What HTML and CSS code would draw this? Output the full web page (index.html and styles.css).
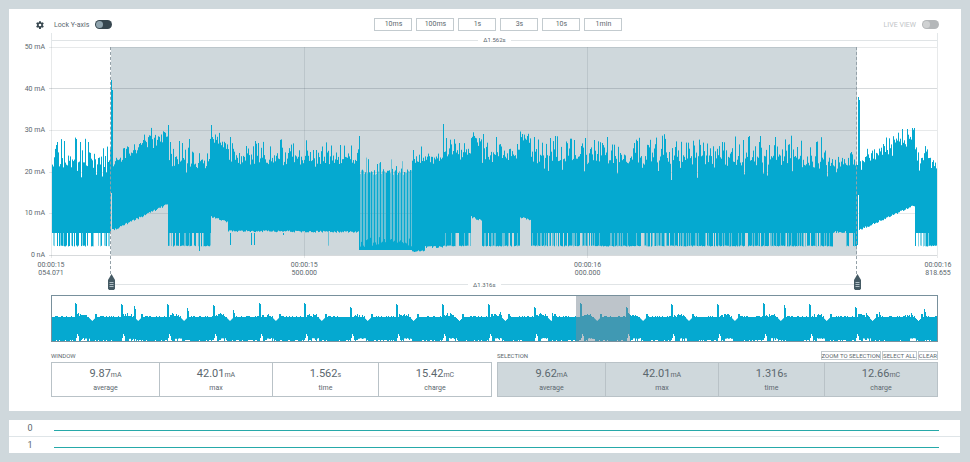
FILE: index.html
```html
<!DOCTYPE html>
<html lang="en">
<head>
<meta charset="utf-8">
<title>Power Profiler</title>
<link rel="stylesheet" href="styles.css">
</head>
<body>
<main class="panel">
  <div class="toolbar">
    <div class="tool-group">
      <button class="gear" type="button" aria-label="Chart settings">
        <svg viewBox="4 3 18 18"><path fill-rule="evenodd" d="M19.4 13a7.500 7.500 0 0 0 0-2l2.100-1.650-2-3.460-2.490 1a7.300 7.300 0 0 0-1.690-.98L14.950 3.300h-4l-.38 2.610c-.61.25-1.170.59-1.690.98l-2.490-1-2 3.460L6.500 11a7.500 7.500 0 0 0 0 2l-2.110 1.650 2 3.460 2.490-1c.52.4 1.080.73 1.690.98l.38 2.650h4l.37-2.650c.61-.25 1.170-.58 1.690-.98l2.490 1 2-3.460zM13 15a3 3 0 1 1 0-6 3 3 0 0 1 0 6z"/></svg>
      </button>
      <label class="switch">Lock Y-axis <input type="checkbox"></label>
    </div>
    <div class="ranges">
      <button type="button">10ms</button>
      <button type="button">100ms</button>
      <button type="button">1s</button>
      <button type="button">3s</button>
      <button type="button">10s</button>
      <button type="button">1min</button>
    </div>
    <label class="switch muted">LIVE VIEW <input type="checkbox" disabled></label>
  </div>

  <div class="content">
    <div class="span window-span"><i></i><span>Δ1.562s</span><i></i></div>

    <div class="chart">
      <div class="y-axis">
        <span>50 mA</span><span>40 mA</span><span>30 mA</span><span>20 mA</span><span>10 mA</span><span>0 nA</span>
      </div>
      <svg class="plot" viewBox="-1 0 887 208" preserveAspectRatio="none">
        <rect class="selected" x="59" y="0" width="746" height="208"/>
        <path class="grid" d="M-3 .5H885M-3 83.500H885M-3 125.500H885M-3 166.500H885M252.500 0V211M535.500 0V211M-.5 0V211M885.500 0V211"/>
        <path class="grid strong" d="M-3 41.500H885M-3 208.500H885"/>
        <path class="wave soft" id="wave-soft"/>
        <path class="wave" id="wave"/>
      </svg>
      <div class="x-axis">
        <span>00:00:15<br>054.071</span>
        <span>00:00:15<br>500.000</span>
        <span>00:00:16<br>000.000</span>
        <span>00:00:16<br>818.655</span>
      </div>
      <div class="span selection-span">
        <svg class="handle" viewBox="0 0 7 16"><path d="M3.500 0 7 6v8.500L6 16H1l-1-1.500V6z"/><path class="grip" d="M1.500 8.500h4M1.500 10.500h4M1.500 12.500h4"/></svg>
        <i></i><span>Δ1.316s</span><i></i>
        <svg class="handle" viewBox="0 0 7 16"><path d="M3.500 0 7 6v8.500L6 16H1l-1-1.500V6z"/><path class="grip" d="M1.500 8.500h4M1.500 10.500h4M1.500 12.500h4"/></svg>
      </div>
      <div class="cursors"></div>
    </div>

    <div class="minimap">
      <svg viewBox="0 0 885 45" preserveAspectRatio="none">
        <path class="wave" id="overview"/>
        <path class="notch" id="notches"/>
        <rect class="viewport" x="524" y="0" width="54" height="45"/>
      </svg>
    </div>

    <div class="stats">
      <section class="stat-group">
        <header><h2>WINDOW</h2></header>
        <div class="cells">
          <div><b>9.87<small>mA</small></b>average</div>
          <div><b>42.01<small>mA</small></b>max</div>
          <div><b>1.562<small>s</small></b>time</div>
          <div><b>15.42<small>mC</small></b>charge</div>
        </div>
      </section>
      <section class="stat-group shaded">
        <header>
          <h2>SELECTION</h2>
          <div class="actions">
            <button type="button">ZOOM TO SELECTION</button>
            <button type="button">SELECT ALL</button>
            <button type="button">CLEAR</button>
          </div>
        </header>
        <div class="cells">
          <div><b>9.62<small>mA</small></b>average</div>
          <div><b>42.01<small>mA</small></b>max</div>
          <div><b>1.316<small>s</small></b>time</div>
          <div><b>12.66<small>mC</small></b>charge</div>
        </div>
      </section>
    </div>
  </div>
</main>

<div class="channels">
  <div class="channel"><span>0</span><i></i></div>
  <div class="channel"><span>1</span><i></i></div>
</div>
<script src="chart.js"></script>
</body>
</html>
```
FILE: styles.css
```css
* { box-sizing: border-box; }

body {
  margin: 0;
  padding: 9px;
  background: #cfd8dc;
  color: #5b676e;
  font: 7px/8px Roboto, "Liberation Sans", sans-serif;
}

button {
  margin: 0;
  padding: 0;
  background: #fff;
  border: 1px solid #c3cbcf;
  color: inherit;
  font: inherit;
}

.panel {
  padding-bottom: 14px;
  background: #fff;
}

.toolbar {
  display: flex;
  align-items: center;
  justify-content: space-between;
  height: 24px;
  padding: 7px 22px 0 27px;
}

.tool-group,
.switch,
.ranges {
  display: flex;
  align-items: center;
}

.tool-group { gap: 10px; }
.switch { gap: 6px; }
.ranges { gap: 5px; }

.gear {
  width: 8px;
  height: 8px;
  border: 0;
}

.gear svg {
  display: block;
  fill: #37474f;
}

.switch input {
  appearance: none;
  width: 17px;
  height: 9px;
  margin: 0;
  padding: 1px;
  border-radius: 5px;
  background: #37474f;
}

.switch input::before {
  content: "";
  display: block;
  width: 7px;
  height: 7px;
  border-radius: 50%;
  background: #90a4ae;
}

.muted { color: #c0c4c6; }
.muted input { background: #b4b7b9; }
.muted input::before { background: #cfd1d2; }

.ranges button {
  width: 38px;
  height: 13px;
  margin-right: -1px;
  line-height: 11px;
}

.content { margin: 0 23px 0 42px; }

.span {
  display: flex;
  align-items: center;
  font-size: 6px;
}

.span i {
  flex: 1;
  height: 1px;
  background: #e0e4e6;
}

.span span { padding: 0 5px; }

.window-span {
  height: 14px;
  border: solid #e3e7e9;
  border-width: 0 1px;
}

.chart { position: relative; }

.plot {
  display: block;
  width: 100%;
  height: 208px;
  overflow: visible;
}

.selected { fill: #cfd8dc; }

.grid {
  fill: none;
  stroke: rgba(55, 71, 79, 0.12);
  vector-effect: non-scaling-stroke;
}

.strong { stroke: rgba(55, 71, 79, 0.2); }

.wave {
  fill: none;
  stroke: #05a9d0;
}

.soft { opacity: 0.5; }

.y-axis {
  position: absolute;
  top: -4px;
  right: 100%;
  display: flex;
  flex-direction: column;
  justify-content: space-between;
  height: 216px;
  padding-right: 6px;
  text-align: right;
  white-space: nowrap;
}

.x-axis {
  display: grid;
  grid-template-columns: 253fr 283fr 350fr 0;
  justify-items: start;
  padding: 6px 0 3px;
  text-align: center;
}

.x-axis span { transform: translateX(-50%); }

.selection-span { margin: -6px 8.7% 0 6.400%; }

.selection-span i,
.selection-span span { margin-top: 5px; }

.handle {
  width: 7px;
  height: 16px;
  fill: #455a64;
}

.grip {
  fill: none;
  stroke: #b0bec5;
}

.cursors {
  position: absolute;
  top: 0;
  bottom: 16px;
  left: 6.650%;
  right: 9.130%;
  border: dashed #94a1a8;
  border-width: 0 1px;
}

.minimap {
  height: 47px;
  margin-top: 5px;
  border: 1px solid #78909c;
}

.minimap svg {
  display: block;
  width: 100%;
  height: 100%;
}

.notch { stroke: #fff; }
.viewport { fill: rgba(124, 137, 150, 0.5); }

.stats {
  display: flex;
  gap: 5px;
  margin-top: 9px;
}

.stat-group { flex: 1; }

.stat-group header {
  display: flex;
  align-items: center;
  justify-content: space-between;
  height: 11px;
  padding-bottom: 2px;
  font-size: 6px;
}

h2 {
  margin: 0;
  font: inherit;
}

.actions {
  display: flex;
  gap: 1px;
}

.actions button {
  height: 9px;
  line-height: 7px;
}

.cells {
  display: grid;
  grid-template-columns: 107fr 113fr 106fr 113fr;
  border: 1px solid #b9c2c7;
  text-align: center;
}

.cells > div { padding: 5px 0 4px; }
.cells > div + div { border-left: 1px solid #b9c2c7; }
.shaded .cells { background: #cfd8dc; }

.cells b {
  display: block;
  margin-bottom: 3px;
  font-size: 11px;
  font-weight: 400;
  line-height: 12px;
}

.cells small { font-size: 7px; }

.channels {
  display: flex;
  flex-direction: column;
  gap: 1px;
  margin: 9px 1px 0 0;
  background: #dfe5e8;
}

.channel {
  display: flex;
  align-items: center;
  height: 16px;
  padding-right: 21px;
  background: #fff;
  font-size: 9px;
}

.channel span {
  width: 45px;
  padding-right: 3px;
  text-align: center;
}

.channel i {
  flex: 1;
  height: 1px;
  margin-top: 5px;
  background: #26a9a9;
}
```
FILE: chart.js
```js
let seed = 7;
function random() {
  seed = (seed * 1664525 + 1013904223) % 4294967296;
  return seed / 4294967296;
}

// start, end, top at start, top at end, bottom at start, bottom at end,
// spike chance, spike height, depth of the slots, share of the low comb lines
const segments = [
  [0, 59, 120, 122, 186, 186, 0.45, 22, 12, 0.65],
  [61, 116, 119, 91, 183, 157, 0.45, 11, 5, 0],
  [116, 159, 120, 122, 186, 186, 0.45, 22, 14, 0.8],
  [159, 176, 97, 105, 170, 175, 0.4, 8, 3, 0],
  [176, 307, 118, 118, 184, 185, 0.5, 19, 3, 0.02],
  [360, 373, 119, 114, 204, 204, 0.4, 10, 3, 0],
  [373, 391, 117, 114, 200, 200, 0.4, 10, 3, 0],
  [391, 419, 114, 110, 186, 186, 0.45, 14, 4, 0.92],
  [419, 430, 96, 103, 170, 174, 0.4, 8, 3, 0],
  [430, 468, 115, 112, 186, 186, 0.45, 16, 4, 0.88],
  [468, 479, 93, 98, 170, 174, 0.4, 6, 3, 0],
  [479, 781, 117, 119, 186, 186, 0.5, 22, 20, 0.88],
  [781, 794, 122, 122, 185, 185, 0.3, 8, 10, 0],
  [794, 805, 120, 120, 186, 186, 0.3, 12, 8, 0.7],
  [807, 863, 121, 94, 183, 158, 0.45, 11, 5, 0],
  [863, 885, 118, 122, 186, 186, 0.5, 16, 8, 0.8]
];

const peaks = {
  4: 98, 12: 94, 24: 92, 28: 95, 36: 95, 116: 78, 127: 94, 137: 92, 159: 78,
  178: 90, 203: 94, 206: 96, 307: 89, 391: 77, 394: 91, 422: 89, 431: 87,
  444: 90, 470: 87, 482: 90, 503: 89, 533: 91, 555: 90, 697: 89, 708: 89,
  723: 90, 764: 95, 850: 82, 855: 82, 860: 81, 862: 81
};

let wave = "";
let soft = "";
const bar = (x, top, bottom) => `M${x + 0.5} ${top.toFixed(1)}V${bottom.toFixed(1)}`;

for (const [start, end, t0, t1, b0, b1, chance, height, depth, comb] of segments) {
  for (let x = start; x < end; x++) {
    const k = (x - start) / (end - start);
    let top = t0 + (t1 - t0) * k - random() * 10;
    if (random() < chance) top -= random() * height;
    else if (random() < 0.25) top += random() * depth;
    if (peaks[x]) top = peaks[x];
    const bottom = b0 + (b1 - b0) * k + (comb > 0.5 ? 0 : random() * 2 - 1);
    wave += bar(x, top, bottom);
    if (random() < comb) {
      const low = bar(x, bottom, 198.5 + random());
      if (random() < 0.7) wave += low;
      else soft += low;
    }
  }
}

// Bursts between the two dense stretches
for (let x = 307; x < 360; x++) {
  const top = 121 + random() * 5 - (random() < 0.2 ? random() * 16 : 0);
  if (x === 307) wave += bar(x, 89, 203);
  else if (x % 3 === 1 || random() < 0.12) wave += bar(x, top, 203);
  else soft += bar(x, top + 2, 203);
  wave += bar(x, 190 + random() * 10, 203);
}

// Start-up surges at both selection edges
wave += bar(59, 33, 146) + bar(60, 43, 182);
wave += bar(805, 118, 198) + bar(806, 50, 148) + bar(807, 53, 180);
wave += bar(199, 186, 198) + bar(202, 186, 198) + bar(178, 186, 198);
wave += bar(147, 186, 204) + bar(231, 186, 188);

document.getElementById("wave").setAttribute("d", wave);
document.getElementById("wave-soft").setAttribute("d", soft);

const surges = [
  [23, 7], [69, 8], [115, 8], [161, 9], [207, 7], [252, 7], [298, 11], [344, 8],
  [390, 8], [436, 8], [482, 11], [528, 7], [574, 11], [619, 8], [665, 8],
  [711, 7], [757, 8], [803, 11]
];
const extras = [[82, 10], [135, 12], [181, 14], [448, 16], [732, 9], [827, 16], [872, 13], [500, 17]];

let overview = "";
let notches = "";
for (let x = 0; x < 885; x++) {
  const phase = (x - 23 + 46 * 2) % 45.9;
  let top = 20 + Math.round(random() * 1.4);
  if (phase > 2 && phase < 12) top -= Math.round(random() * 3);
  if (phase > 14 && phase < 20) top = 25 - Math.abs(17 - phase);
  if (phase >= 20 && phase < 22) top = 18;
  overview += bar(x, top, 45);
  if (random() < 0.25) notches += bar(x, 44, 45);
  if (phase > 7 && phase < 15 && random() < 0.75) notches += bar(x, 42 + random(), 45);
}
for (const [x, top] of surges) {
  overview += bar(x, top, 30) + bar(x + 1, top + 1, 30);
  notches += bar(x + 1, 42, 45) + bar(x + 2, 38, 45) + bar(x + 3, 40, 45);
}
for (const [x, top] of extras) overview += bar(x, top, 30) + bar(x + 1, top + 3, 30);

document.getElementById("overview").setAttribute("d", overview);
document.getElementById("notches").setAttribute("d", notches);
```
